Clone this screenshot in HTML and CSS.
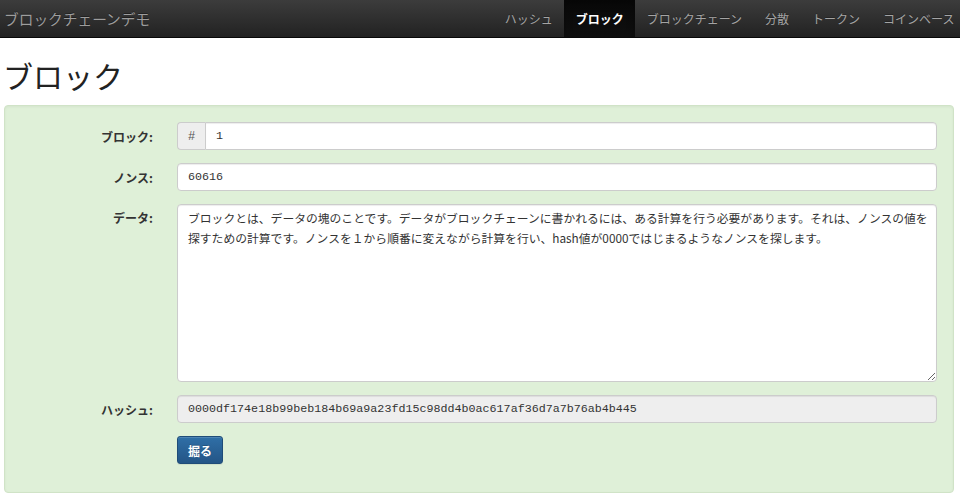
FILE: index.html
```html
<!DOCTYPE html>
<html lang="ja">
<head>
<meta charset="utf-8">
<title>ブロック</title>
<link rel="stylesheet" href="styles.css">
</head>
<body>
<nav class="navbar">
  <a class="brand" href="#">ブロックチェーンデモ</a>
  <ul class="nav">
    <li><a href="#">ハッシュ</a></li>
    <li class="active"><a href="#">ブロック</a></li>
    <li><a href="#">ブロックチェーン</a></li>
    <li><a href="#">分散</a></li>
    <li><a href="#">トークン</a></li>
    <li><a href="#">コインベース</a></li>
  </ul>
</nav>
<main class="page">
  <h1 class="title">ブロック</h1>
  <form class="well">
    <label class="label" for="block">ブロック:</label>
    <div class="input-group">
      <span class="addon">#</span>
      <input class="control mono grouped" id="block" type="text" value="1">
    </div>

    <label class="label" for="nonce">ノンス:</label>
    <input class="control mono" id="nonce" type="text" value="60616">

    <label class="label label-top" for="data">データ:</label>
    <textarea class="control area" id="data">ブロックとは、データの塊のことです。データがブロックチェーンに書かれるには、ある計算を行う必要があります。それは、ノンスの値を探すための計算です。ノンスを１から順番に変えながら計算を行い、hash値が0000ではじまるようなノンスを探します。</textarea>

    <label class="label" for="hash">ハッシュ:</label>
    <input class="control mono readonly" id="hash" type="text" readonly value="0000df174e18b99beb184b69a9a23fd15c98dd4b0ac617af36d7a7b76ab4b445">

    <span></span>
    <div class="actions"><button class="btn" type="button">掘る</button></div>
  </form>
</main>
</body>
</html>
```

FILE: styles.css
```css
* { box-sizing: border-box; }

html, body {
  margin: 0;
  padding: 0;
  background: #fff;
  color: #333;
  font-family: "Noto Sans CJK JP", "Noto Sans", sans-serif;
  overflow: hidden;
}

.navbar {
  display: flex;
  align-items: stretch;
  height: 38px;
  background: linear-gradient(to bottom, #3c3c3c 0%, #222 100%);
  border-bottom: 1px solid #080808;
}

.brand {
  display: flex;
  align-items: center;
  padding: 0 0 0 4px;
  font-size: 14.7px;
  color: #9d9d9d;
  text-decoration: none;
  text-shadow: 0 -1px 0 rgba(0, 0, 0, 0.35);
}

.nav {
  display: flex;
  margin: 0 -6px 0 auto;
  padding: 0;
  list-style: none;
}

.nav li { display: flex; }

.nav a {
  display: flex;
  align-items: center;
  padding: 0 11.5px;
  font-size: 12px;
  color: #a4a4a4;
  text-decoration: none;
  text-shadow: 0 -1px 0 rgba(0, 0, 0, 0.25);
}

.nav .active a {
  color: #fff;
  font-weight: bold;
  background: linear-gradient(to bottom, #080808 0%, #0f0f0f 100%);
  box-shadow: inset 0 3px 9px rgba(0, 0, 0, 0.25);
}

.page {
  padding: 0 6px 0 4px;
}

.title {
  margin: 21px 0 13px -1px;
  font-size: 30px;
  line-height: 33px;
  font-weight: normal;
  color: #222;
}

.well {
  display: grid;
  grid-template-columns: 148px 1fr;
  column-gap: 24px;
  row-gap: 13px;
  padding: 16px 16px 28px 0;
  background: #dff0d8;
  border: 1px solid #d0e3c7;
  border-radius: 4px;
  box-shadow: inset 0 1px 3px rgba(0, 0, 0, 0.05);
}

.label {
  display: flex;
  align-items: center;
  justify-content: flex-end;
  height: 28px;
  font-size: 12px;
  font-weight: bold;
  color: #333;
}

.label-top { height: 27px; }

.input-group {
  display: flex;
  height: 28px;
}

.addon {
  display: flex;
  align-items: center;
  justify-content: center;
  width: 28px;
  flex: none;
  font-family: "Liberation Sans", sans-serif;
  font-size: 12px;
  color: #555;
  background: #eee;
  border: 1px solid #ccc;
  border-right: 0;
  border-radius: 4px 0 0 4px;
}

.control {
  display: block;
  width: 100%;
  height: 28px;
  margin: 0;
  padding: 0 10px;
  color: #555;
  background: #fff;
  border: 1px solid #ccc;
  border-radius: 4px;
  box-shadow: inset 0 1px 1px rgba(0, 0, 0, 0.075);
  outline: none;
}

.grouped {
  flex: 1;
  border-radius: 0 4px 4px 0;
}

.mono {
  font-family: "Liberation Mono", monospace;
  font-size: 11.7px;
  color: #333;
}

.area {
  height: 178px;
  padding: 3px 4px 3px 10px;
  font-family: "Noto Sans CJK JP", "Noto Sans", sans-serif;
  font-size: 11.8px;
  line-height: 20px;
  color: #333;
  resize: vertical;
}

.readonly {
  background: #eee;
  color: #333;
}

.actions { display: flex; }

.btn {
  height: 28px;
  padding: 0 10px;
  font-family: "Noto Sans CJK JP", "Noto Sans", sans-serif;
  font-size: 12px;
  font-weight: bold;
  color: #fff;
  background: linear-gradient(to bottom, #2f6fa7 0%, #245586 100%);
  border: 1px solid #1f4c78;
  border-radius: 3px;
  text-shadow: 0 -1px 0 rgba(0, 0, 0, 0.2);
  box-shadow: inset 0 1px 0 rgba(255, 255, 255, 0.15), 0 1px 1px rgba(0, 0, 0, 0.075);
}
```
